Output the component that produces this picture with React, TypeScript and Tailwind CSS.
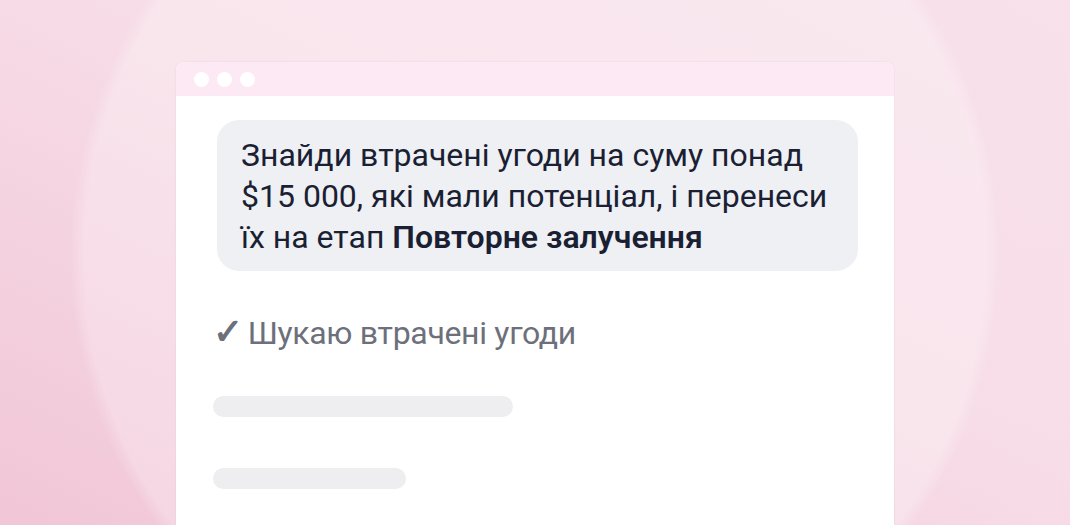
import React from "react";

const font = { fontFamily: "Roboto, 'Noto Sans', sans-serif" };

export default function App() {
  return (
    <div
      className="relative w-[1070px] h-[525px] overflow-hidden flex justify-center pt-[62px] bg-[radial-gradient(circle_465px_at_535px_255px,rgba(255,255,255,0.26)_97%,rgba(255,255,255,0)_100%),linear-gradient(to_bottom_left,#f8e1eb_0%,#f7dde7_45%,#f1c6d7_100%)]"
      style={font}
    >
      <div className="w-[718px] h-[480px] shrink-0 flex flex-col rounded-t-[8px] overflow-hidden bg-white shadow-[0_0_2px_rgba(120,80,100,0.12)]">
        {/* title bar */}
        <div className="h-[34px] shrink-0 bg-[#fde9f3] flex items-center gap-[8px] pl-[18px]">
          <span className="w-[15px] h-[15px] rounded-full bg-white" />
          <span className="w-[15px] h-[15px] rounded-full bg-white" />
          <span className="w-[15px] h-[15px] rounded-full bg-white" />
        </div>

        {/* chat body */}
        <div className="flex flex-col pl-[37px] pr-[36px] pt-[24px]">
          <div className="ml-[4px] rounded-[22px] bg-[#eef0f3] pl-[24px] pr-[16px] pt-[15px] pb-[13px] text-[32px] leading-[41px] text-[#1b1f33]">
            Знайди втрачені угоди на суму понад
            <br />
            $15 000, які мали потенціал, і перенеси
            <br />
            їх на етап <span className="font-semibold">Повторне залучення</span>
          </div>

          <div className="mt-[41px] flex items-baseline text-[32px] leading-[41px] text-[#6d707b] tracking-[-0.01em]">
            <span className="mr-[5px] text-[36px] leading-[41px] font-semibold">✓</span>
            <span>Шукаю втрачені угоди</span>
          </div>

          <div className="mt-[42px] w-[300px] h-[21px] rounded-full bg-[#eeeef0]" />
          <div className="mt-[51px] w-[193px] h-[21px] rounded-full bg-[#eeeef0]" />
        </div>
      </div>
    </div>
  );
}
